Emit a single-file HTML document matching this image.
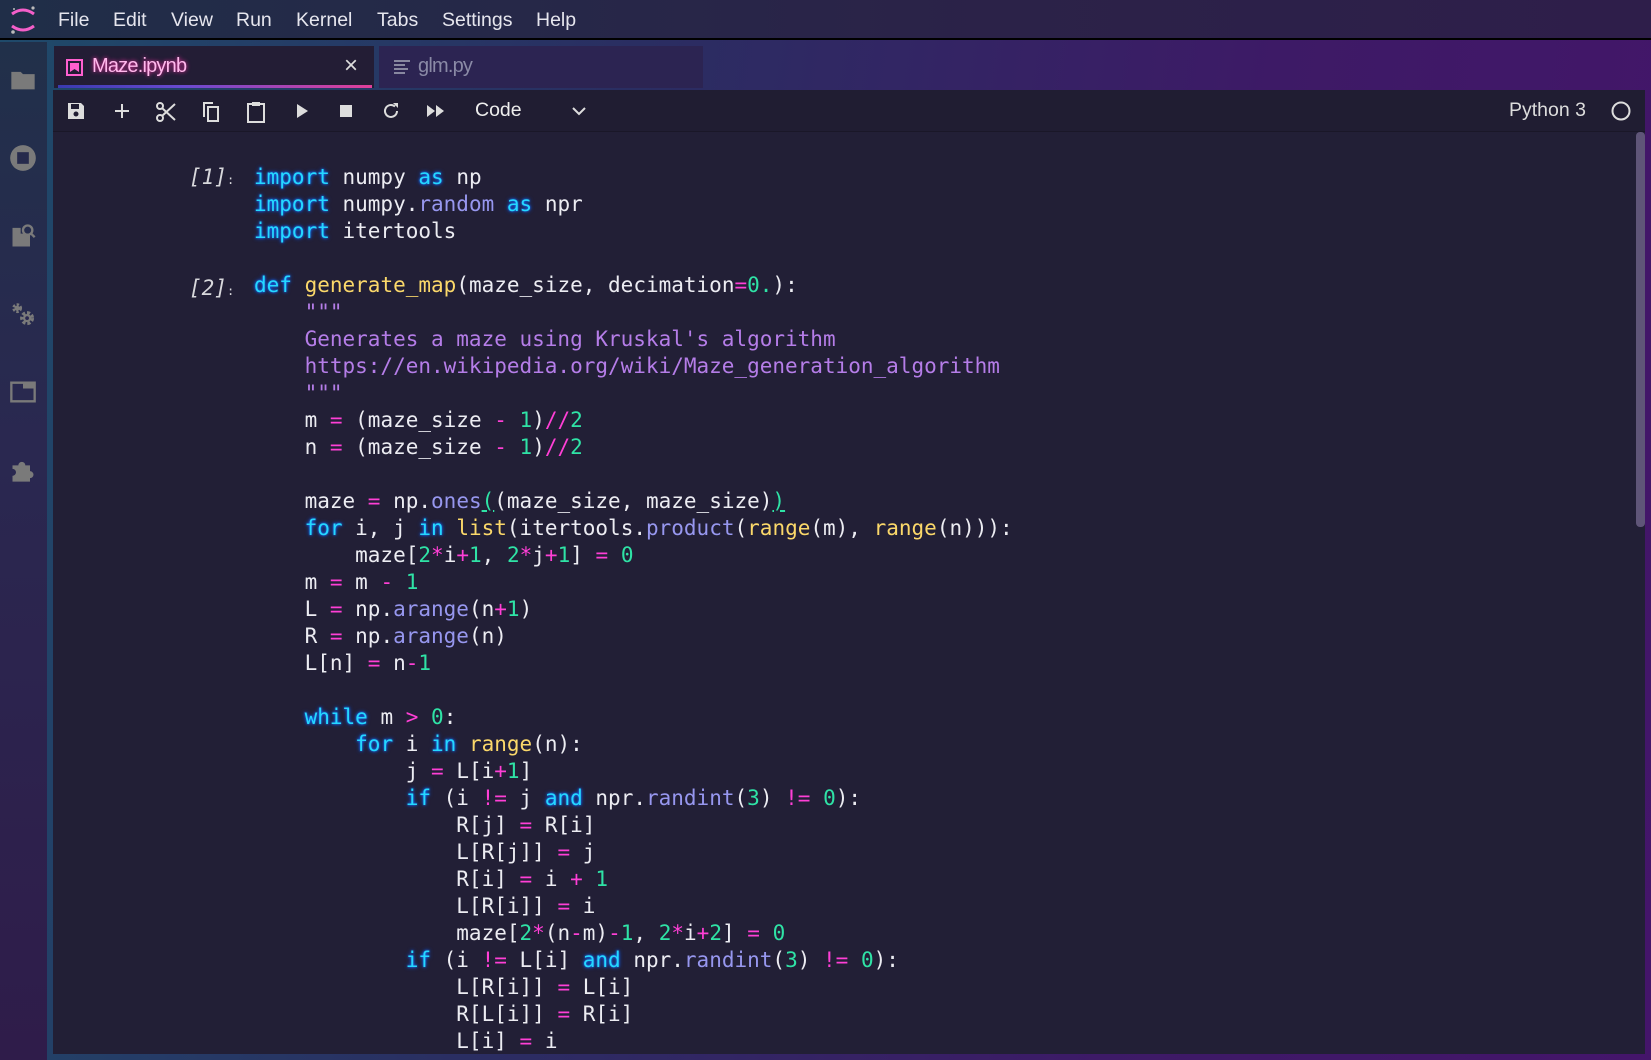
<!DOCTYPE html>
<html><head><meta charset="utf-8">
<style>
*{margin:0;padding:0;box-sizing:border-box}
body{width:1651px;height:1060px;overflow:hidden;position:relative;font-family:"Liberation Sans",sans-serif;background:linear-gradient(100deg,#1f4a6a 0%,#2a2e62 35%,#3d1a66 70%,#44156a 100%)}
#menu{position:absolute;left:0;top:0;width:1651px;height:40px;background:linear-gradient(90deg,#202e48,#2b2248 60%,#2e1e4a);border-bottom:2px solid #000}
#menu span{position:absolute;top:9px;font-size:19.5px;color:#e6e6ee}
#side{position:absolute;left:0;top:42px;width:47px;height:1018px;background:linear-gradient(180deg,#21304a,#2a2850 40%,#2f1c4a)}
#side svg{position:absolute;left:9px}
.tab{position:absolute;top:46px;height:42px}
#panel{position:absolute;left:53px;top:90px;width:1592px;height:964px;background:#221f36}
#tb{position:absolute;left:0;top:0;width:1592px;height:42px;background:#201d32;border-bottom:1px solid #1a1728}
#tb svg{position:absolute;top:11px}
pre{position:absolute;font-family:"DejaVu Sans Mono","Liberation Mono",monospace;font-size:21px;line-height:27px;color:#ececf2}
.k{color:#25d8ff;text-shadow:0 0 4px #0a5cff,0 0 2px #1e7bff}
.f{color:#fbd86a}.m{color:#9797ef}.s{color:#b57de8}.n{color:#2fe3a6}.o{color:#ff3fd6}
.p{color:#d8d8dc;font-style:italic}
</style></head><body>
<div id="menu">
<svg style="position:absolute;left:8px;top:4px" width="30" height="32" viewBox="0 0 30 32"><path d="M4 10 Q15 2 26 10" stroke="#f45fc9" stroke-width="3" fill="none"/><path d="M4 22 Q15 30 26 22" stroke="#f45fc9" stroke-width="3" fill="none"/><circle cx="25" cy="4" r="1.6" fill="#bbb"/><circle cx="5" cy="28" r="1.8" fill="#bbb"/><circle cx="6" cy="5" r="1" fill="#bbb"/></svg>
<span style="left:58px">File</span><span style="left:113px">Edit</span><span style="left:171px">View</span><span style="left:236px">Run</span><span style="left:296px">Kernel</span><span style="left:377px">Tabs</span><span style="left:442px">Settings</span><span style="left:536px">Help</span>
</div>
<div id="side">
<svg style="top:24px" width="28" height="28" viewBox="0 0 24 24"><path d="M2 5h8l2 2h10v13H2z" fill="#7a7a7a"/></svg>
<svg style="top:102px" width="28" height="28" viewBox="0 0 24 24"><circle cx="12" cy="12" r="11" fill="#7a7a7a"/><rect x="7" y="7" width="10" height="10" fill="#262a4c"/></svg>
<svg style="top:180px" width="28" height="28" viewBox="0 0 24 24"><path d="M3 5h7v16H3zM10 10h8v11h-8z" fill="#7a7a7a"/><circle cx="16" cy="7" r="4" stroke="#7a7a7a" stroke-width="2" fill="none"/><path d="M19 10l3 3" stroke="#7a7a7a" stroke-width="2"/></svg>
<svg style="top:258px" width="28" height="28" viewBox="0 0 24 24"><circle cx="7" cy="7" r="3" fill="none" stroke="#7a7a7a" stroke-width="2.4" stroke-dasharray="2 1.4"/><circle cx="7" cy="7" r="2.2" fill="#7a7a7a"/><circle cx="15.5" cy="15.5" r="4.5" fill="none" stroke="#7a7a7a" stroke-width="3" stroke-dasharray="2.6 1.6"/><circle cx="15.5" cy="15.5" r="3.5" fill="#7a7a7a"/><circle cx="15.5" cy="15.5" r="1.6" fill="#2a2850"/></svg>
<svg style="top:336px" width="28" height="28" viewBox="0 0 24 24"><path d="M2 4h20v16H2z" stroke="#7a7a7a" stroke-width="2" fill="none"/><path d="M12 4h10v5H12z" fill="#7a7a7a"/></svg>
<svg style="top:414px" width="28" height="28" viewBox="0 0 24 24"><path d="M3 8h5a3 3 0 1 1 6 0h4v5a3 3 0 1 1 0 6v3H3v-5a3 3 0 1 0 0-6z" fill="#7a7a7a"/></svg>
</div>
<div class="tab" style="left:54px;width:320px;background:#231d35">
<svg style="position:absolute;left:12px;top:13px" width="17" height="17" viewBox="0 0 17 17"><rect x="1" y="1" width="15" height="15" fill="none" stroke="#ff5fcf" stroke-width="2"/><path d="M4 4h9v9l-4.5-3L4 13z" fill="#ff5fcf"/></svg>
<span style="position:absolute;left:38px;top:9px;font-size:20px;color:#ffb8ec;text-shadow:0 0 4px #ff2fa8;letter-spacing:-0.8px">Maze.ipynb</span>
<span style="position:absolute;left:290px;top:6px;font-size:24px;color:#ddd">×</span>
<div style="position:absolute;left:4px;right:2px;bottom:0px;height:3px;background:linear-gradient(90deg,#3a3ab0,#6a4ad0 40%,#e0409a)"></div>
</div>
<div class="tab" style="left:379px;width:324px;background:#2c2452">
<svg style="position:absolute;left:15px;top:14px" width="16" height="15" viewBox="0 0 16 15"><path d="M0 1h16M0 5h11M0 9h14M0 13h11" stroke="#8888a0" stroke-width="2"/></svg>
<span style="position:absolute;left:39px;top:9px;font-size:20px;color:#8a8aa6;letter-spacing:-0.8px">glm.py</span>
</div>
<div id="panel">
<div id="tb">
<svg style="left:13px" width="20" height="20" viewBox="0 0 20 20"><path d="M2 2h13l3 3v13H2z" fill="#ddd"/><rect x="5" y="3" width="8" height="5" fill="#201d32"/><circle cx="10" cy="13" r="2.5" fill="#201d32"/></svg>
<svg style="left:59px" width="20" height="20" viewBox="0 0 20 20"><path d="M10 3v14M3 10h14" stroke="#ddd" stroke-width="2"/></svg>
<svg style="left:102px" width="22" height="22" viewBox="0 0 22 22"><circle cx="5" cy="5" r="3" stroke="#ddd" stroke-width="2" fill="none"/><circle cx="5" cy="17" r="3" stroke="#ddd" stroke-width="2" fill="none"/><path d="M7 7l13 12M7 15L20 3" stroke="#ddd" stroke-width="2"/></svg>
<svg style="left:148px" width="20" height="22" viewBox="0 0 20 22"><path d="M12 2H3v14" stroke="#ddd" stroke-width="2" fill="none"/><rect x="7" y="6" width="10" height="14" stroke="#ddd" stroke-width="2" fill="none"/></svg>
<svg style="left:193px" width="20" height="22" viewBox="0 0 20 22"><rect x="2" y="3" width="16" height="18" stroke="#ddd" stroke-width="2" fill="none"/><rect x="6" y="1" width="8" height="4" fill="#ddd"/></svg>
<svg style="left:240px" width="18" height="20" viewBox="0 0 18 20"><path d="M4 3l11 7-11 7z" fill="#ddd"/></svg>
<svg style="left:284px" width="18" height="20" viewBox="0 0 18 20"><rect x="3" y="4" width="12" height="12" fill="#ddd"/></svg>
<svg style="left:328px" width="20" height="20" viewBox="0 0 20 20"><path d="M16 10a6 6 0 1 1-2-4.5" stroke="#ddd" stroke-width="2" fill="none"/><path d="M12 2h5v5z" fill="#ddd"/></svg>
<svg style="left:372px" width="22" height="20" viewBox="0 0 22 20"><path d="M2 4l8 6-8 6zM11 4l8 6-8 6z" fill="#ddd"/></svg>
<span style="position:absolute;left:422px;top:9px;font-size:19.5px;color:#eee">Code</span>
<svg style="left:518px;top:14px" width="16" height="14" viewBox="0 0 16 14"><path d="M2 4l6 6 6-6" stroke="#ddd" stroke-width="2" fill="none"/></svg>
<span style="position:absolute;left:1456px;top:9px;font-size:19.5px;color:#ddd">Python 3</span>
<svg style="left:1558px;top:11px" width="20" height="20" viewBox="0 0 20 20"><circle cx="10" cy="10" r="8.5" stroke="#ddd" stroke-width="2" fill="none"/></svg>
</div>
<div style="position:absolute;left:1583px;top:42px;width:9px;height:395px;background:#5f5578;border-radius:4px"></div>
</div>
<pre class="p" style="left:189px;top:164px">[1]<span style="font-size:12px;font-style:normal">:</span>



[2]<span style="font-size:12px;font-style:normal">:</span></pre>
<pre style="left:254px;top:164px"><span class="k">import</span> numpy <span class="k">as</span> np
<span class="k">import</span> numpy.<span class="m">random</span> <span class="k">as</span> npr
<span class="k">import</span> itertools

<span class="k">def</span> <span class="f">generate_map</span>(maze_size, decimation<span class="o">=</span><span class="n">0.</span>):
    <span class="s">"""</span>
<span class="s">    Generates a maze using Kruskal's algorithm</span>
<span class="s">    https://en.wikipedia.org/wiki/Maze_generation_algorithm</span>
<span class="s">    """</span>
    m <span class="o">=</span> (maze_size <span class="o">-</span> <span class="n">1</span>)<span class="o">//</span><span class="n">2</span>
    n <span class="o">=</span> (maze_size <span class="o">-</span> <span class="n">1</span>)<span class="o">//</span><span class="n">2</span>

    maze <span class="o">=</span> np.<span class="m">ones</span><span class="n" style="text-decoration:underline">(</span>(maze_size, maze_size)<span class="n" style="text-decoration:underline">)</span>
    <span class="k">for</span> i, j <span class="k">in</span> <span class="f">list</span>(itertools.<span class="m">product</span>(<span class="f">range</span>(m), <span class="f">range</span>(n))):
        maze[<span class="n">2</span><span class="o">*</span>i<span class="o">+</span><span class="n">1</span>, <span class="n">2</span><span class="o">*</span>j<span class="o">+</span><span class="n">1</span>] <span class="o">=</span> <span class="n">0</span>
    m <span class="o">=</span> m <span class="o">-</span> <span class="n">1</span>
    L <span class="o">=</span> np.<span class="m">arange</span>(n<span class="o">+</span><span class="n">1</span>)
    R <span class="o">=</span> np.<span class="m">arange</span>(n)
    L[n] <span class="o">=</span> n<span class="o">-</span><span class="n">1</span>

    <span class="k">while</span> m <span class="o">&gt;</span> <span class="n">0</span>:
        <span class="k">for</span> i <span class="k">in</span> <span class="f">range</span>(n):
            j <span class="o">=</span> L[i<span class="o">+</span><span class="n">1</span>]
            <span class="k">if</span> (i <span class="o">!=</span> j <span class="k">and</span> npr.<span class="m">randint</span>(<span class="n">3</span>) <span class="o">!=</span> <span class="n">0</span>):
                R[j] <span class="o">=</span> R[i]
                L[R[j]] <span class="o">=</span> j
                R[i] <span class="o">=</span> i <span class="o">+</span> <span class="n">1</span>
                L[R[i]] <span class="o">=</span> i
                maze[<span class="n">2</span><span class="o">*</span>(n<span class="o">-</span>m)<span class="o">-</span><span class="n">1</span>, <span class="n">2</span><span class="o">*</span>i<span class="o">+</span><span class="n">2</span>] <span class="o">=</span> <span class="n">0</span>
            <span class="k">if</span> (i <span class="o">!=</span> L[i] <span class="k">and</span> npr.<span class="m">randint</span>(<span class="n">3</span>) <span class="o">!=</span> <span class="n">0</span>):
                L[R[i]] <span class="o">=</span> L[i]
                R[L[i]] <span class="o">=</span> R[i]
                L[i] <span class="o">=</span> i</pre>
</body></html>
